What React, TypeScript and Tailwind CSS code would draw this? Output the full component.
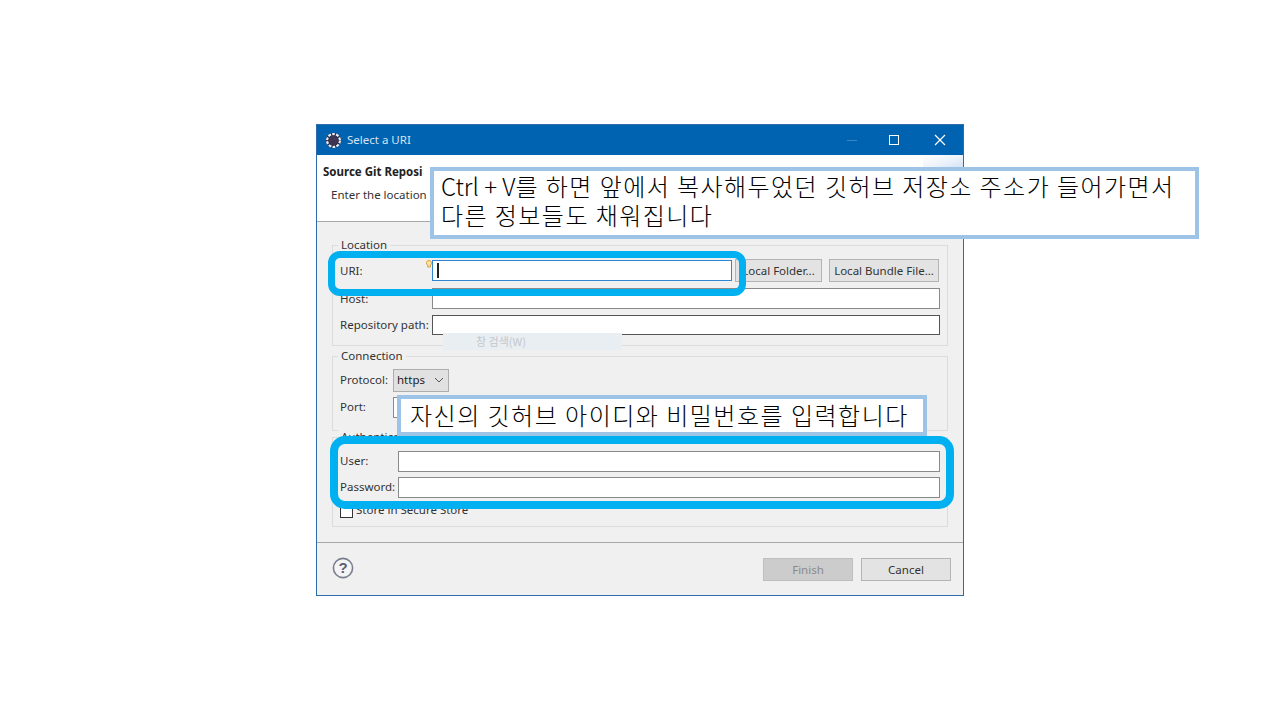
import type { ReactNode } from "react";

const uiFont = "font-['Noto_Sans','Liberation_Sans',sans-serif]";
const krFont = "font-['Noto_Sans_CJK_KR',sans-serif]";

function GroupBox({ title, className, children }: { title: string; className: string; children: ReactNode }) {
  return (
    <div className={`relative border border-[#dcdcdc] pl-[7px] pr-[7px] ${className}`}>
      <span className="absolute left-[5px] top-[-9px] bg-[#f0f0f0] px-[3px] text-[11.5px] leading-[15px] text-[#333]">{title}</span>
      {children}
    </div>
  );
}

function Field({ className }: { className: string }) {
  return <div className={`border border-[#8a8a8a] bg-white ${className}`} />;
}

function SmallButton({ label, className }: { label: string; className: string }) {
  return (
    <div className={`flex items-center justify-center whitespace-nowrap border border-[#b4b4b4] bg-[#e3e3e3] text-[11.5px] text-[#333] ${className}`}>
      {label}
    </div>
  );
}

function Label({ text, className }: { text: string; className: string }) {
  return <span className={`whitespace-nowrap text-[11.5px] text-[#333] ${className}`}>{text}</span>;
}

function EclipseIcon() {
  return (
    <svg width="17" height="17" viewBox="0 0 17 17">
      <circle cx="8.5" cy="8.5" r="7.6" fill="#1f2a4a" />
      <circle cx="8.5" cy="8.5" r="6.4" fill="none" stroke="#efeaf0" strokeWidth="2.2" strokeDasharray="2.8 1.2" />
      <circle cx="8.5" cy="8.5" r="4.8" fill="#3d3552" />
    </svg>
  );
}

export default function App() {
  return (
    <div className={`relative h-[720px] w-[1280px] overflow-hidden bg-white ${uiFont}`}>
      <div className="absolute left-[316px] top-[124px] flex h-[472px] w-[648px] flex-col border border-[#2f6da8] bg-[#f0f0f0]">
        <div className="flex h-[30px] shrink-0 items-center bg-[#0063b1] pl-[8px] text-white">
          <EclipseIcon />
          <span className="ml-[5px] text-[11.5px] text-[#d5e4f2]">Select a URI</span>
          <div className="ml-auto flex items-center">
            <div className="mr-[32px] h-px w-[10px] bg-[#3d86c4]" />
            <div className="mr-[35px] h-[10px] w-[10px] border border-white" />
            <svg width="12" height="12" viewBox="0 0 12 12" className="mr-[17px]">
              <path d="M1 1l10 10M11 1L1 11" stroke="#fff" strokeWidth="1.2" />
            </svg>
          </div>
        </div>

        <div className="relative h-[67px] shrink-0 border-b border-[#a8a8a8] bg-white pl-[6px] pt-[8px]">
          <div className="absolute right-0 top-0 h-[14px] w-[40px] bg-gradient-to-br from-white via-[#eef3fb] to-[#cfe0f3]" />
          <div className="text-[11.5px] font-bold leading-[18px] text-[#222]">Source Git Reposi</div>
          <div className="ml-[8px] mt-[5px] text-[11.5px] leading-[18px] text-[#333]">Enter the location</div>
        </div>

        <div className="flex flex-1 flex-col px-[15px] pt-[23px]">
          <GroupBox title="Location" className="h-[101px] pt-[14px]">
            <div className="flex h-[21px] items-center">
              <Label text="URI:" className="w-[92px]" />
              <div className="h-[21px] w-[300px] border border-[#2f86d0] bg-white" />
              <SmallButton label="Local Folder..." className="ml-[3px] h-[23px] w-[87px]" />
              <SmallButton label="Local Bundle File..." className="ml-[7px] h-[23px] w-[110px]" />
            </div>
            <div className="mt-[7px] flex h-[21px] items-center">
              <Label text="Host:" className="w-[92px]" />
              <Field className="h-[21px] flex-1" />
            </div>
            <div className="mt-[6px] flex h-[20px] items-center">
              <Label text="Repository path:" className="w-[92px]" />
              <div className="h-[20px] flex-1 border border-[#555] bg-white" />
            </div>
          </GroupBox>

          <GroupBox title="Connection" className="mt-[10px] h-[75px] pt-[12px]">
            <div className="flex h-[22px] items-center">
              <Label text="Protocol:" className="w-[53px]" />
              <div className="flex h-[23px] w-[56px] items-center justify-between border border-[#adadad] bg-[#e1e1e1] pl-[3px] pr-[4px] text-[11.5px] text-[#222]">
                https
                <svg width="10" height="6" viewBox="0 0 10 6">
                  <path d="M1 1l4 4 4-4" fill="none" stroke="#555" strokeWidth="1" />
                </svg>
              </div>
            </div>
            <div className="mt-[6px] flex h-[21px] items-center">
              <Label text="Port:" className="w-[53px] pb-[2px]" />
              <Field className="h-[21px] w-[100px]" />
            </div>
          </GroupBox>

          <GroupBox title="Authentication" className="mt-[6px] h-[90px] pt-[13px]">
            <div className="flex h-[21px] items-center">
              <Label text="User:" className="w-[58px] pb-[2px]" />
              <Field className="h-[21px] flex-1" />
            </div>
            <div className="mt-[5px] flex h-[21px] items-center">
              <Label text="Password:" className="w-[58px] pb-[2px]" />
              <Field className="h-[21px] flex-1" />
            </div>
            <div className="mt-[6px] flex h-[14px] items-center">
              <div className="h-[13px] w-[13px] border border-[#333] bg-white" />
              <Label text="Store in Secure Store" className="ml-[3px] pb-[2px]" />
            </div>
          </GroupBox>
        </div>

        <div className="flex h-[53px] shrink-0 items-center border-t border-[#a8a8a8] pl-[15px] pr-[12px]">
          <svg width="22" height="22" viewBox="0 0 22 22" className="mb-[2px]">
            <circle cx="11" cy="11" r="9.6" fill="#f4f4f6" stroke="#7b7f8c" strokeWidth="1.6" />
            <text x="11" y="16" textAnchor="middle" fontSize="15" fontWeight="700" fill="#5a5f70" fontFamily="Liberation Sans">?</text>
          </svg>
          <SmallButton label="Finish" className="ml-auto h-[23px] w-[90px] !bg-[#cccccc] !border-[#bfbfbf] pt-[1px] !text-[#8a8a8a]" />
          <SmallButton label="Cancel" className="ml-[8px] h-[23px] w-[90px] pt-[1px]" />
        </div>
      </div>

      <svg width="6" height="9" viewBox="0 0 6 9" className="absolute left-[426px] top-[260px]">
        <path d="M3 .5a2.5 2.5 0 0 1 1.4 4.6V7H1.6V5.1A2.5 2.5 0 0 1 3 .5z" fill="#fbe3a6" stroke="#e09a35" strokeWidth="1" />
      </svg>
      <div className="absolute left-[437px] top-[263px] h-[15px] w-[2px] bg-[#222]" />

      <div className="absolute left-[443px] top-[333px] flex h-[17px] w-[179px] items-center bg-[#e9eef2] pl-[33px] text-[11px] text-[#c3c8ce]">
        <span className={krFont}>창 검색(W)</span>
      </div>

      <div className="absolute left-[328px] top-[251px] h-[45px] w-[418px] rounded-[12px] border-[7px] border-[#00b0f0]" />
      <div className="absolute left-[330px] top-[436px] h-[73px] w-[624px] rounded-[15px] border-[8px] border-[#00b0f0]" />

      <div className={`absolute left-[430px] top-[167px] h-[72px] w-[769px] border-4 border-[#9dc3e6] bg-white pl-[7px] text-[24px] font-light leading-[29px] tracking-[1.45px] text-black ${krFont}`}>
        <span className="tracking-normal">Ctrl + V</span>를 하면 앞에서 복사해두었던 깃허브 저장소 주소가 들어가면서
        <br />
        다른 정보들도 채워집니다
      </div>
      <div className={`absolute left-[397px] top-[395px] h-[41px] w-[530px] border-4 border-[#9dc3e6] bg-white pl-[9px] text-[24px] font-light leading-[31px] tracking-[1.5px] text-black ${krFont}`}>
        자신의 깃허브 아이디와 비밀번호를 입력합니다
      </div>
    </div>
  );
}
